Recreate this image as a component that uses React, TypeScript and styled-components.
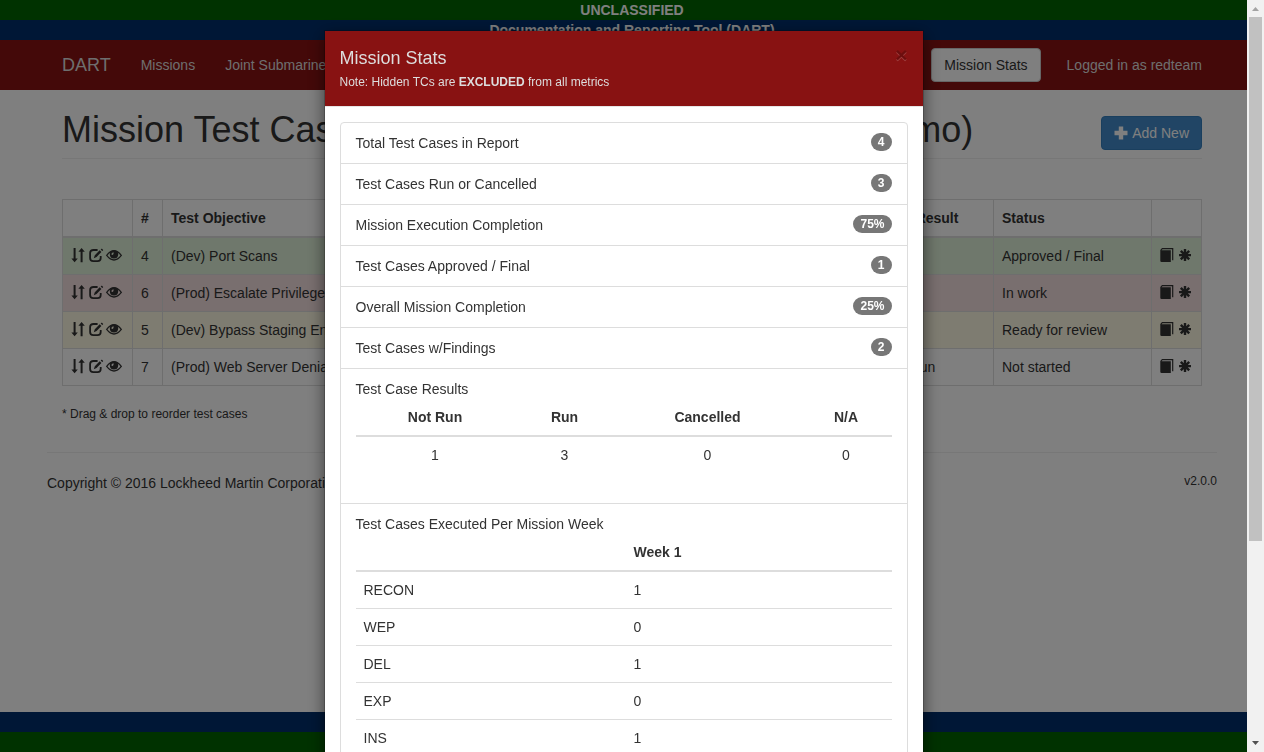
import React from "react";
import styled, { createGlobalStyle } from "styled-components";

const GlobalStyle = createGlobalStyle`
  *, *::before, *::after { box-sizing: border-box; }
  body {
    margin: 0;
    font-family: "Liberation Sans", Arial, sans-serif;
    font-size: 14px;
    line-height: 20px;
    color: #333;
    background: #fff;
  }
`;

const Page = styled.div`
  display: flex;
  flex-direction: column;
  height: 100vh;
  overflow: hidden;
`;

const Banner = styled.div<{ $tone: "green" | "blue" }>`
  flex: none;
  height: 20px;
  text-align: center;
  font-weight: bold;
  color: #fff;
  background: ${(p) => (p.$tone === "green" ? "#006400" : "#002f6c")};
`;

const NavBar = styled.nav`
  flex: none;
  background: #881212;
`;

const Container = styled.div`
  width: 100%;
  max-width: 1170px;
  margin: 0 auto;
  padding: 0 15px;
`;

const NavInner = styled(Container)`
  display: flex;
  align-items: center;
  gap: 30px;
  height: 50px;
`;

const Brand = styled.a`
  font-size: 18px;
  color: #ddd;
  text-decoration: none;
`;

const NavLink = styled.a`
  color: #ddd;
  text-decoration: none;
  white-space: nowrap;
`;

const NavRight = styled.div`
  display: flex;
  align-items: center;
  gap: 26px;
  margin-left: auto;
`;

const Button = styled.button<{ $primary?: boolean }>`
  display: inline-flex;
  align-items: center;
  gap: 4px;
  height: 34px;
  padding: 6px 12px;
  border: 1px solid ${(p) => (p.$primary ? "#357ebd" : "#ccc")};
  border-radius: 4px;
  background: ${(p) => (p.$primary ? "#428bca" : "#fff")};
  color: ${(p) => (p.$primary ? "#fff" : "#333")};
  font: inherit;
  white-space: nowrap;
`;

const Main = styled.main`
  flex: none;
`;

const PageHeader = styled.div`
  display: flex;
  align-items: flex-end;
  margin: 20px 0 40px;
  padding-bottom: 8px;
  border-bottom: 1px solid #eee;
`;

const Title = styled.h1`
  flex: 1;
  display: flex;
  justify-content: space-between;
  margin: 0 128px 0 0;
  font-size: 36px;
  line-height: 40px;
  font-weight: normal;
  white-space: nowrap;
`;

const CasesTable = styled.table`
  width: 100%;
  table-layout: fixed;
  border-collapse: collapse;
  border: 1px solid #ddd;

  th, td {
    padding: 8px;
    border: 1px solid #ddd;
    text-align: left;
    white-space: nowrap;
    overflow: hidden;
  }
  thead th { border-bottom-width: 2px; }
`;

const Col = styled.col<{ $w?: number }>`
  width: ${(p) => (p.$w ? `${p.$w}px` : "auto")};
`;

const CaseRow = styled.tr<{ $bg: string }>`
  background: ${(p) => p.$bg};
`;

const IconRow = styled.div`
  display: flex;
  gap: 4px;
  height: 20px;
  padding-top: 2px;
`;

const IconButton = styled.button`
  flex: none;
  width: 14px;
  height: 14px;
  padding: 0;
  border: 0;
  background: none;
  color: #333;

  svg { overflow: visible; }
`;

const Glyph = styled.svg`
  display: block;
  width: 14px;
  height: 14px;
  fill: currentColor;
`;

const Hint = styled.p`
  margin: 18px 0 28px;
  font-size: 12px;
`;

const Footer = styled.footer`
  display: flex;
  justify-content: space-between;
  width: 100%;
  max-width: 1170px;
  margin: 0 auto;
  padding-top: 20px;
  border-top: 1px solid #eee;
`;

const Version = styled.small`
  font-size: 12px;
  line-height: 16px;
`;

const BottomBanners = styled.div`
  flex: none;
  margin-top: auto;
`;

const Overlay = styled.div`
  position: fixed;
  inset: 0;
  display: flex;
`;

const Backdrop = styled.div`
  flex: 1;
  overflow-y: auto;
  scrollbar-width: none;
  background: rgba(0, 0, 0, 0.5);
`;

const Dialog = styled.section`
  width: 600px;
  max-width: 100%;
  margin: 30px auto;
  border: 1px solid rgba(0, 0, 0, 0.2);
  background: #fff;
  background-clip: padding-box;
  box-shadow: 0 5px 15px rgba(0, 0, 0, 0.5);
`;

const DialogHeader = styled.header`
  display: flex;
  justify-content: space-between;
  align-items: flex-start;
  padding: 15px 15px 12px;
  border-bottom: 1px solid #e5e5e5;
  background: #881212;
  color: #ddd;
`;

const DialogTitle = styled.h4`
  margin: 0;
  font-size: 18px;
  line-height: 24px;
  font-weight: 500;
`;

const DialogNote = styled.div`
  font-size: 12px;
  line-height: 24px;
  font-weight: 500;
`;

const CloseButton = styled.button`
  margin-top: -2px;
  padding: 0;
  border: 0;
  background: none;
  color: #000;
  font: bold 21px/21px "Liberation Sans", Arial, sans-serif;
  text-shadow: 0 1px 0 #fff;
  opacity: 0.2;
`;

const StatList = styled.ul`
  margin: 15px;
  padding: 0;
  list-style: none;
  border: 1px solid #ddd;
  border-radius: 4px;
`;

const StatItem = styled.li`
  padding: 10px 15px;

  & + & { border-top: 1px solid #ddd; }
`;

const StatLine = styled.div`
  display: flex;
  justify-content: space-between;
  align-items: flex-start;
`;

const Badge = styled.span`
  padding: 3px 7px;
  border-radius: 10px;
  background: #777;
  color: #fff;
  font-size: 12px;
  line-height: 12px;
  font-weight: bold;
`;

const StatTable = styled.table<{ $center?: boolean }>`
  width: 100%;
  margin-bottom: ${(p) => (p.$center ? 20 : 0)}px;
  table-layout: fixed;
  border-collapse: collapse;

  th, td {
    padding: 8px;
    text-align: ${(p) => (p.$center ? "center" : "left")};
  }
  thead th { border-bottom: 2px solid #ddd; }
  tbody tr + tr td { border-top: 1px solid #ddd; }
`;

const ScrollBar = styled.div`
  flex: none;
  display: flex;
  flex-direction: column;
  width: 17px;
  background: #f1f1f1;
`;

const ScrollArrow = styled.svg`
  flex: none;
  display: block;
  width: 17px;
  height: 17px;
`;

const ScrollTrack = styled.div`
  flex: 1;
  padding: 0 2px;
`;

const ScrollThumb = styled.div`
  height: 73%;
  background: #c1c1c1;
`;

const SortIcon = () => (
  <Glyph viewBox="0 0 14 14">
    <path d="M2.600 0h2v10.500H6.800L3.600 14.200 .4 10.500h2.200zM9.600 14.200h2V3.700H13.800L10.600 0 7.400 3.700h2.200z" />
  </Glyph>
);

const EditIcon = () => (
  <Glyph viewBox="0 0 14 14">
    <path
      d="M8.600 2H4.500Q1.100 2 1.100 5v5q0 3.200 3.200 3.200h4.200q3.200 0 3.200-3.200V8"
      fill="none"
      stroke="currentColor"
      strokeWidth="1.800"
    />
    <path d="M4.800 10.200l1-3L10.700 2.300l1.700 1.700-4.800 4.900zM11.700 1.600l.7-.8q.3-.3.600 0l1 1q.3.300 0 .6l-.8.700z" />
  </Glyph>
);

const EyeIcon = () => (
  <Glyph viewBox="0 0 14 14">
    <path
      d="M-.3 7.400Q3.300 2.600 7 2.600t7.300 4.800Q10.700 12 7 12T-.3 7.400z"
      fill="none"
      stroke="currentColor"
      strokeWidth="1.300"
    />
    <path
      fillRule="evenodd"
      d="M3.500 3.600Q7 1.600 10.500 3.600 11.200 4.700 11.200 6.200 11.200 10.400 7 10.400T2.800 6.200Q2.800 4.700 3.500 3.600zM6.500 4.200Q4.300 4.600 4.400 6.600 5.600 7.300 6.300 6.300 6.800 5.400 6.500 4.200z"
    />
  </Glyph>
);

const BookIcon = () => (
  <Glyph viewBox="0 0 14 14">
    <path d="M2 0H13.300v12.200h-1.200V1.200H2.500L1.500 2.200h9.300V14H1.500Q.3 14 .3 12.800V2z" />
  </Glyph>
);

const AsteriskIcon = () => (
  <Glyph viewBox="0 0 14 14">
    <path
      d="M7 1.100v12M1 7.100h12M2.800 2.900l8.400 8.400M11.200 2.900l-8.400 8.400"
      fill="none"
      stroke="currentColor"
      strokeWidth="2.400"
    />
  </Glyph>
);

const PlusIcon = () => (
  <Glyph viewBox="0 0 14 14">
    <path d="M4.800 .5h4.400V4.800h4.300v4.400H9.200v4.300H4.800V9.200H.5V4.800h4.300z" />
  </Glyph>
);

const cases = [
  { id: 4, objective: "(Dev) Port Scans", result: "", status: "Approved / Final", bg: "#dff0d8" },
  { id: 6, objective: "(Prod) Escalate Privileges", result: "", status: "In work", bg: "#f2dede" },
  { id: 5, objective: "(Dev) Bypass Staging Environment", result: "", status: "Ready for review", bg: "#fcf8e3" },
  { id: 7, objective: "(Prod) Web Server Denial", result: "Not Run", status: "Not started", bg: "#fff" },
];

const stats = [
  ["Total Test Cases in Report", "4"],
  ["Test Cases Run or Cancelled", "3"],
  ["Mission Execution Completion", "75%"],
  ["Test Cases Approved / Final", "1"],
  ["Overall Mission Completion", "25%"],
  ["Test Cases w/Findings", "2"],
];

const weeks = [
  ["RECON", 1],
  ["WEP", 0],
  ["DEL", 1],
  ["EXP", 0],
  ["INS", 1],
];

export default function App() {
  return (
    <>
      <GlobalStyle />
      <Page>
        <Banner $tone="green">UNCLASSIFIED</Banner>
        <Banner $tone="blue">Documentation and Reporting Tool (DART)</Banner>
        <NavBar>
          <NavInner>
            <Brand href="#">DART</Brand>
            <NavLink href="#missions">Missions</NavLink>
            <NavLink href="#mission">Joint Submarine</NavLink>
            <NavRight>
              <Button type="button">Mission Stats</Button>
              <NavLink href="#account">Logged in as redteam</NavLink>
            </NavRight>
          </NavInner>
        </NavBar>
        <Main>
          <Container>
            <PageHeader>
              <Title>
                <span>Mission Test Cases</span>
                <span>(Demo)</span>
              </Title>
              <Button type="button" $primary>
                <PlusIcon />
                Add New
              </Button>
            </PageHeader>
            <CasesTable>
              <colgroup>
                <Col $w={70} />
                <Col $w={30} />
                <Col />
                <Col $w={118} />
                <Col $w={158} />
                <Col $w={50} />
              </colgroup>
              <thead>
                <tr>
                  <th />
                  <th>#</th>
                  <th>Test Objective</th>
                  <th>Test Result</th>
                  <th>Status</th>
                  <th />
                </tr>
              </thead>
              <tbody>
                {cases.map((c) => (
                  <CaseRow key={c.id} $bg={c.bg}>
                    <td>
                      <IconRow>
                        <IconButton type="button" aria-label="Reorder"><SortIcon /></IconButton>
                        <IconButton type="button" aria-label="Edit"><EditIcon /></IconButton>
                        <IconButton type="button" aria-label="Hide"><EyeIcon /></IconButton>
                      </IconRow>
                    </td>
                    <td>{c.id}</td>
                    <td>{c.objective}</td>
                    <td>{c.result}</td>
                    <td>{c.status}</td>
                    <td>
                      <IconRow>
                        <IconButton type="button" aria-label="Clone"><BookIcon /></IconButton>
                        <IconButton type="button" aria-label="Supporting data"><AsteriskIcon /></IconButton>
                      </IconRow>
                    </td>
                  </CaseRow>
                ))}
              </tbody>
            </CasesTable>
            <Hint>* Drag &amp; drop to reorder test cases</Hint>
          </Container>
          <Footer>
            <span>Copyright © 2016 Lockheed Martin Corporation</span>
            <Version>v2.0.0</Version>
          </Footer>
        </Main>
        <BottomBanners>
          <Banner $tone="blue" />
          <Banner $tone="green" />
        </BottomBanners>
      </Page>

      <Overlay>
        <Backdrop>
          <Dialog role="dialog" aria-label="Mission Stats">
            <DialogHeader>
              <div>
                <DialogTitle>Mission Stats</DialogTitle>
                <DialogNote>
                  Note: Hidden TCs are <b>EXCLUDED</b> from all metrics
                </DialogNote>
              </div>
              <CloseButton type="button" aria-label="Close">×</CloseButton>
            </DialogHeader>
            <StatList>
              {stats.map(([label, value]) => (
                <StatItem key={label}>
                  <StatLine>
                    {label}
                    <Badge>{value}</Badge>
                  </StatLine>
                </StatItem>
              ))}
              <StatItem>
                Test Case Results
                <StatTable $center>
                  <colgroup>
                    <Col $w={159} />
                    <Col $w={100} />
                    <Col $w={186} />
                    <Col />
                  </colgroup>
                  <thead>
                    <tr>
                      <th>Not Run</th>
                      <th>Run</th>
                      <th>Cancelled</th>
                      <th>N/A</th>
                    </tr>
                  </thead>
                  <tbody>
                    <tr>
                      <td>1</td>
                      <td>3</td>
                      <td>0</td>
                      <td>0</td>
                    </tr>
                  </tbody>
                </StatTable>
              </StatItem>
              <StatItem>
                Test Cases Executed Per Mission Week
                <StatTable>
                  <colgroup>
                    <Col $w={270} />
                    <Col />
                  </colgroup>
                  <thead>
                    <tr>
                      <th />
                      <th>Week 1</th>
                    </tr>
                  </thead>
                  <tbody>
                    {weeks.map(([name, count]) => (
                      <tr key={name}>
                        <td>{name}</td>
                        <td>{count}</td>
                      </tr>
                    ))}
                  </tbody>
                </StatTable>
              </StatItem>
            </StatList>
          </Dialog>
        </Backdrop>
        <ScrollBar aria-hidden="true">
          <ScrollArrow viewBox="0 0 17 17">
            <path d="M5 11l3.500-4 3.500 4z" fill="#a3a3a3" />
          </ScrollArrow>
          <ScrollTrack>
            <ScrollThumb />
          </ScrollTrack>
          <ScrollArrow viewBox="0 0 17 17">
            <path d="M5 6l3.500 4L12 6z" fill="#505050" />
          </ScrollArrow>
        </ScrollBar>
      </Overlay>
    </>
  );
}
